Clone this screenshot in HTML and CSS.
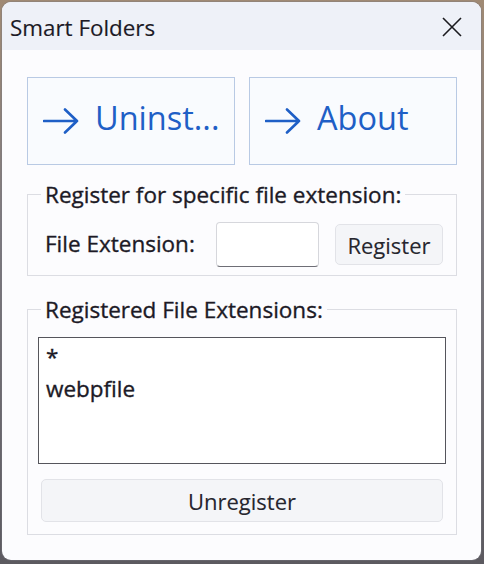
FILE: index.html
```html
<!DOCTYPE html>
<html>
<head>
<meta charset="utf-8">
<link rel="stylesheet" href="styles.css">
</head>
<body>
<div class="window">
  <div class="titlebar">
    <span class="title">Smart Folders</span>
    <svg class="close" width="20" height="20" viewBox="0 0 20 20"><path d="M1 1 L19 19 M19 1 L1 19" stroke="#1b1b1f" stroke-width="1.6" fill="none"/></svg>
  </div>
  <div class="content">
    <div class="actions">
      <div class="action">
        <svg class="arrow" width="36" height="26" viewBox="0 0 36 26"><path d="M1 13 H34 M22 1.5 L34 13 L22 24.5" stroke="#1f5fc6" stroke-width="2.6" fill="none" stroke-linecap="round" stroke-linejoin="round"/></svg>
        <span class="action-label">Uninst...</span>
      </div>
      <div class="action">
        <svg class="arrow" width="36" height="26" viewBox="0 0 36 26"><path d="M1 13 H34 M22 1.5 L34 13 L22 24.5" stroke="#1f5fc6" stroke-width="2.6" fill="none" stroke-linecap="round" stroke-linejoin="round"/></svg>
        <span class="action-label">About</span>
      </div>
    </div>
    <fieldset class="group group-register">
      <legend class="legend">Register for specific file extension:</legend>
      <div class="row">
        <span class="label">File Extension:</span>
        <div class="input"></div>
        <div class="btn btn-register">Register</div>
      </div>
    </fieldset>
    <fieldset class="group group-list">
      <legend class="legend">Registered File Extensions:</legend>
      <div class="listbox">
        <div class="item">*</div>
        <div class="item">webpfile</div>
      </div>
      <div class="btn btn-unregister">Unregister</div>
    </fieldset>
  </div>
</div>
</body>
</html>
```
FILE: styles.css
```css
html, body {
  margin: 0;
  padding: 0;
}
body {
  width: 484px;
  height: 564px;
  overflow: hidden;
  background: linear-gradient(180deg, #a08a74 0%, #7d7a80 40%, #5c5a60 100%);
  font-family: "Open Sans", "Noto Sans", sans-serif;
  color: #1c1a26;
  -webkit-text-stroke: 0.35px currentColor;
}
.window {
  margin: 2px 0 0 2px;
  width: 479px;
  height: 558px;
  border-radius: 9px;
  background: #fcfcfe;
  overflow: hidden;
  box-shadow: 0 0 0 1px rgba(120,120,130,0.35);
  display: flex;
  flex-direction: column;
}
.titlebar {
  height: 48px;
  flex: none;
  background: #eef1f8;
  display: flex;
  align-items: center;
  justify-content: space-between;
  padding: 0 19px 0 8px;
}
.title {
  font-size: 22.4px;
  line-height: 30px;
  margin-top: 3px;
  -webkit-text-stroke: 0.15px currentColor;
}
.close {
  display: block;
  margin-top: 2px;
}
.content {
  padding: 27px 24px 0 25px;
  display: flex;
  flex-direction: column;
}
.actions {
  display: flex;
  gap: 14px;
}
.action {
  width: 206px;
  height: 86px;
  border: 1px solid #b9cae4;
  background: #f9fbfe;
  display: flex;
  align-items: center;
  padding-left: 15px;
  box-sizing: content-box;
}
.arrow {
  display: block;
}
.action-label {
  margin-left: 16px;
  font-size: 32.5px;
  line-height: 40px;
  color: #1f5fc6;
  margin-top: -6px;
  -webkit-text-stroke: 0;
}
.group {
  margin: 0;
  border: 1px solid #dcdde3;
  padding: 0 10px;
  min-width: 0;
}
.legend {
  font-size: 22.5px;
  line-height: 29px;
  padding: 0 4px;
  margin-left: 3px;
}
.group-register {
  margin-top: 15px;
  padding-bottom: 8px;
}
.row {
  display: flex;
  align-items: center;
  margin-top: 13px;
  padding-left: 7px;
}
.label {
  font-size: 22.5px;
  width: 171px;
  margin-top: -2px;
}
.input {
  width: 101px;
  height: 43px;
  border: 1px solid #d6d7dc;
  border-bottom: 1px solid #6e6e76;
  border-radius: 4px;
  background: #ffffff;
}
.btn {
  background: #f4f5f8;
  border: 1px solid #e2e3e8;
  border-radius: 5px;
  font-size: 22px;
  color: #26262e;
  display: flex;
  align-items: center;
  justify-content: center;
  -webkit-text-stroke: 0.1px currentColor;
}
.btn-register {
  margin-left: 16px;
  width: 106px;
  height: 39px;
}
.group-list {
  margin-top: 19px;
  padding-bottom: 12px;
}
.listbox {
  margin-top: 13px;
  height: 127px;
  box-sizing: border-box;
  border: 1px solid #55555c;
  background: #ffffff;
  padding: 3px 7px;
}
.item {
  font-size: 22.5px;
  line-height: 32px;
}
.btn-unregister {
  margin: 15px 3px 0 3px;
  height: 43px;
  box-sizing: border-box;
}
```
